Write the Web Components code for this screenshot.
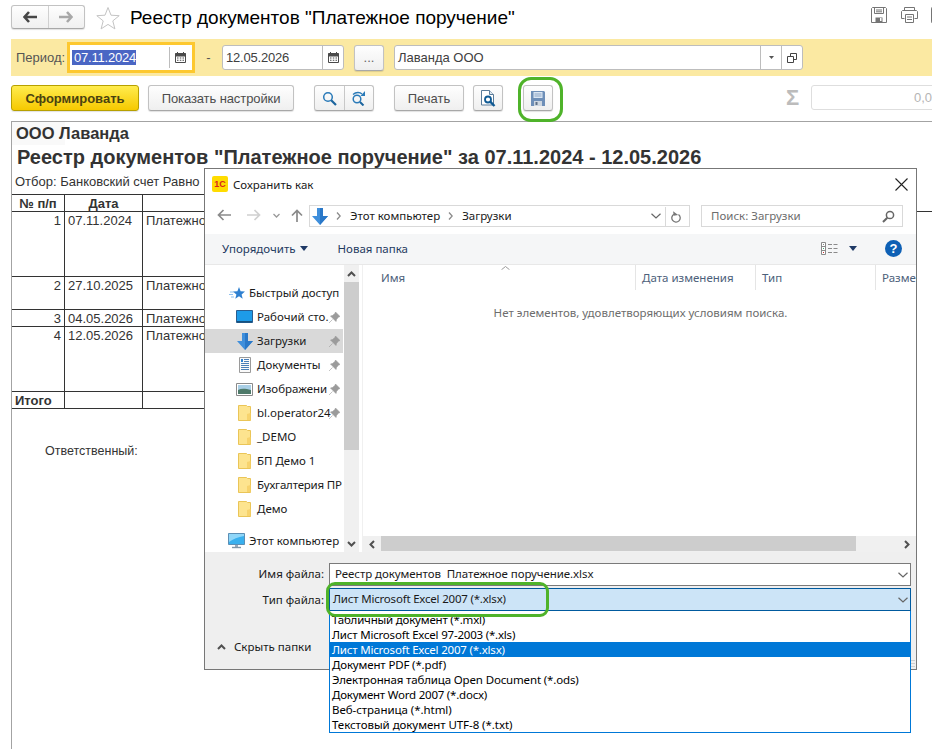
<!DOCTYPE html>
<html lang="ru">
<head>
<meta charset="utf-8">
<title>Реестр документов</title>
<style>
    html, body { margin: 0; padding: 0; background: #fff; }
</style>
</head>
<body>

<doc-form>
    <doc-header>Реестр документов "Платежное поручение"</doc-header>
    <period-bar></period-bar>
    <report-toolbar></report-toolbar>
    <report-sheet></report-sheet>
    <save-dialog></save-dialog>
    <green-mark style="left:518px;top:77px;width:45px;height:45px;border-radius:13px"></green-mark>
    <green-mark style="left:326px;top:582px;width:223px;height:35px;border-radius:9px"></green-mark>
</doc-form>

<script>
// < ======================================================
// < Icons
// < ======================================================

const FOLDER = `<svg width="13" height="16" viewBox="0 0 13 16"><path d="M.5.500h8l1 1h3v14H.5z" fill="#fde48f" stroke="#eac557"/><path d="M9 15V9l3.500-1v7z" fill="#f7d36d"/></svg>`;

const ICONS = {
    back: `<svg width="14" height="12" viewBox="0 0 14 12"><path d="M6 1 1.500 6 6 11M2 6h12" fill="none" stroke="#474747" stroke-width="2.600"/></svg>`,
    forward: `<svg width="14" height="12" viewBox="0 0 14 12"><path d="M8 1l4.500 5L8 11M12 6H0" fill="none" stroke="#a8a8a8" stroke-width="2.600"/></svg>`,
    star: `<svg width="24" height="24" viewBox="0 0 24 24"><path d="M12 1.500l3 7.700 8.200.5-6.400 5.200 2.100 8-6.900-4.500-6.900 4.500 2.100-8L.8 9.700 9 9.200z" fill="#fff" stroke="#c4c4c4"/></svg>`,
    saveOutline: `<svg width="16" height="16" viewBox="0 0 16 16"><path d="M1.500.5h13l1 1v14H.5v-14z" fill="none" stroke="#757575"/><path d="M3.500 1v5.500h9V1M5 3h6M5 4.800h6" fill="none" stroke="#757575"/><path d="M4.500 15v-4.500h7V15z" fill="#757575"/><path d="M9 11h1.500v3H9z" fill="#fff"/></svg>`,
    printOutline: `<svg width="17" height="16" viewBox="0 0 17 16"><path d="M3.500 4V.5h10V4M3.500 11.500h-3v-7l1-1h14l1 1v7h-3" fill="none" stroke="#757575"/><path d="M4.500 7.500h8v8h-8zM6 10h5M6 12.500h5" fill="#fff" stroke="#757575"/></svg>`,
    calendar: `<svg width="11" height="11" viewBox="0 0 11 11"><path d="M.5 2h10v8.500H.5z" fill="none" stroke="#4a4a4a"/><path d="M.5 1.500h10V4H.5zM2.500 0v2M8.500 0v2" fill="#4a4a4a" stroke="#4a4a4a"/><path d="M2 5.500h1.500v1H2zM4.800 5.500h1.500v1H4.800zM7.500 5.500H9v1H7.500zM2 7.800h1.500v1H2zM4.800 7.800h1.500v1H4.800zM7.500 7.800H9v1H7.500z" fill="#4a4a4a"/></svg>`,
    caret: `<svg width="5" height="3" viewBox="0 0 5 3"><path d="M0 0h5L2.500 3z" fill="#555"/></svg>`,
    openRef: `<svg width="10" height="10" viewBox="0 0 10 10"><path d="M3.500.5h6v6h-6z" fill="#fff" stroke="#444"/><path d="M.5 3.500h6v6h-6z" fill="#fff" stroke="#444"/></svg>`,
    search: `<svg width="15" height="15" viewBox="0 0 15 15"><circle cx="6" cy="6" r="4.300" fill="none" stroke="#2a7ab8" stroke-width="1.500"/><path d="M9.200 9.200 14 14" stroke="#1c659e" stroke-width="2.200"/></svg>`,
    searchNext: `<svg width="15" height="15" viewBox="0 0 15 15"><circle cx="6" cy="8" r="3.800" fill="none" stroke="#2a7ab8" stroke-width="1.500"/><path d="M9 11l3.500 3.500" stroke="#1c659e" stroke-width="2"/><path d="M2 3.500C5 .8 9 1 11 3" fill="none" stroke="#2a7ab8" stroke-width="1.300"/><path d="M14 0v5H9.500z" fill="#2a7ab8"/></svg>`,
    preview: `<svg width="15" height="17" viewBox="0 0 15 17"><path d="M.5.500h8l4 4V15H.5z" fill="#fff" stroke="#5a7b99"/><path d="M8.500.500v4h4" fill="#dfe8f0" stroke="#5a7b99"/><circle cx="7" cy="9.500" r="3" fill="#fff" stroke="#0f5a94" stroke-width="1.800"/><path d="M9.200 11.700 13.500 16" stroke="#0f5a94" stroke-width="2.400"/></svg>`,
    floppy: `<svg width="14" height="15" viewBox="0 0 14 15"><path d="M0 0h13l1 1v14H0z" fill="#6e8fb8"/><path d="M2.500 1h9v6h-9z" fill="#dbe6f2"/><path d="M3.500 3h7M3.500 5h7" stroke="#8ba5c6"/><path d="M3 10h8v5H3z" fill="#cdd6e0"/><path d="M4.500 11h2v3h-2z" fill="#5d6f86"/></svg>`,
    navBack: `<svg width="14" height="12" viewBox="0 0 14 12"><path d="M6.500 1 1.500 6l5 5M2 6h12" fill="none" stroke="#8a8a8a" stroke-width="1.700"/></svg>`,
    navForward: `<svg width="14" height="12" viewBox="0 0 14 12"><path d="M7.500 1l5 5-5 5M12 6H0" fill="none" stroke="#d0d0d0" stroke-width="1.700"/></svg>`,
    navUp: `<svg width="12" height="13" viewBox="0 0 12 13"><path d="M1 6.500l5-5 5 5M6 2v11" fill="none" stroke="#8a8a8a" stroke-width="1.700"/></svg>`,
    chevDownSmall: `<svg width="7" height="5" viewBox="0 0 7 5"><path d="M.5 1 3.500 4l3-3" fill="none" stroke="#9a9a9a" stroke-width="1.300"/></svg>`,
    chevRight: `<svg width="5" height="8" viewBox="0 0 5 8"><path d="M1 .5 4.200 4 1 7.500" fill="none" stroke="#8a8a8a" stroke-width="1.300"/></svg>`,
    chevDown: `<svg class="chev" width="10" height="6" viewBox="0 0 10 6"><path d="M.5.800 5 5 9.500.800" fill="none" stroke="#666" stroke-width="1.200"/></svg>`,
    downloads: `<svg width="16" height="17" viewBox="0 0 16 17"><path d="M5 0h6v8h5l-8 9-8-9h5z" fill="#3f8fdc"/><path d="M8 0h3v8h5l-8 9z" fill="#2a78c8"/></svg>`,
    refresh: `<svg width="10" height="12" viewBox="0 0 10 12"><path d="M3 3.200a4.200 4.200 0 1 0 4.500.3" fill="none" stroke="#777" stroke-width="1.300"/><path d="M2.500 0v4.500H7z" fill="#777" transform="rotate(-8 4 3)"/></svg>`,
    lens: `<svg width="13" height="13" viewBox="0 0 13 13"><circle cx="8" cy="5" r="3.600" fill="none" stroke="#666" stroke-width="1.500"/><path d="M5.300 7.700 1 12" stroke="#666" stroke-width="2"/></svg>`,
    close: `<svg width="13" height="13" viewBox="0 0 13 13"><path d="M.5.500l12 12M12.500.500l-12 12" stroke="#222" stroke-width="1.100"/></svg>`,
    views: `<svg width="17" height="13" viewBox="0 0 17 13"><path d="M.5.500h4v12h-4zM.5 4.500h4M.5 8.500h4" fill="#fff" stroke="#8a8a8a"/><path d="M2 2h1v1H2z" fill="#888"/><path d="M2 10h1v1H2z" fill="#c33"/><path d="M2 6h1v1H2z" fill="#4a7"/><path d="M7 2.500h4M12.500 2.500h4M7 6.500h4M12.500 6.500h4M7 10.500h4M12.500 10.500h4" stroke="#8a8a8a"/></svg>`,
    caretNavy: `<svg width="8" height="5" viewBox="0 0 8 5"><path d="M0 0h8L4 5z" fill="#1f3a66"/></svg>`,
    sortUp: `<svg width="9" height="4" viewBox="0 0 9 4"><path d="M.5 3.700 4.500.5l4 3.200" fill="none" stroke="#9a9a9a"/></svg>`,
    scrollUp: `<svg width="9" height="6" viewBox="0 0 9 6"><path d="M1 5l3.500-3.500L8 5" fill="none" stroke="#505050" stroke-width="2"/></svg>`,
    scrollDown: `<svg width="9" height="6" viewBox="0 0 9 6"><path d="M1 1l3.500 3.500L8 1" fill="none" stroke="#505050" stroke-width="2"/></svg>`,
    scrollLeft: `<svg width="6" height="9" viewBox="0 0 6 9"><path d="M5 1 1.500 4.500 5 8" fill="none" stroke="#505050" stroke-width="2"/></svg>`,
    scrollRight: `<svg width="6" height="9" viewBox="0 0 6 9"><path d="M1 1l3.500 3.500L1 8" fill="none" stroke="#505050" stroke-width="2"/></svg>`,
    quick: `<svg width="16" height="15" viewBox="0 0 16 15"><path d="M10 1l1.600 4.300 4.400.3-3.400 2.800 1.100 4.400L10 10.300l-3.700 2.500 1.100-4.400-3.400-2.800 4.400-.3z" fill="#2f80d0"/><path d="M1 6h4M0 8.500h4M2 11h3" stroke="#8fc0ee"/></svg>`,
    desktop: `<svg width="17" height="14" viewBox="0 0 17 14"><path d="M.5.500h16v12H.5z" fill="#1d9be8" stroke="#2a5d8f"/><path d="M1 11h15v1.500H1z" fill="#14517f"/></svg>`,
    arrow: `<svg width="16" height="17" viewBox="0 0 16 17"><path d="M5 0h6v8h5l-8 9-8-9h5z" fill="#3f8fdc"/><path d="M8 0h3v8h5l-8 9z" fill="#2a78c8"/></svg>`,
    docs: `<svg width="12" height="16" viewBox="0 0 12 16"><path d="M.5.500h11v15H.5z" fill="#fafafa" stroke="#9a9a9a"/><path d="M5 2.500h5M5 4.500h5M2 6.500h8M2 8.500h8M2 10.500h8M2 12.500h8" stroke="#4a7fb8"/><path d="M2 2h2v3H2z" fill="#2f80d0"/></svg>`,
    images: `<svg width="17" height="13" viewBox="0 0 17 13"><path d="M.5.500h16v12H.5z" fill="#fff" stroke="#8a8a8a"/><path d="M2 2h13v5H2z" fill="#a9cfe6"/><path d="M2 7c4-2 8-1 13 0v4H2z" fill="#4e7a6a"/></svg>`,
    folder: FOLDER,
    computer: `<svg width="17" height="16" viewBox="0 0 17 16"><path d="M.5.500h16v11H.5z" fill="#39b0ee" stroke="#5c8fb5"/><path d="M1 1h15v2C10 4 5 6 1 9z" fill="#8fd6f8"/><path d="M7 12h3v2H7z" fill="#9ab"/><path d="M4 14.500h9" stroke="#7f96a8" stroke-width="1.400"/></svg>`,
    pin: `<svg width="11" height="11" viewBox="0 0 11 11"><path d="M6.500 0 11 4.500 9.500 5 7.500 7.500 7 9.500 1.500 4 3.500 3.500 6 1.500zM3.500 7.500 0 11" fill="#9b9b9b" stroke="#9b9b9b" stroke-width=".6"/></svg>`
};

// < ======================================================
// < Base class
// < ======================================================

/**
 * Base for all page elements, fills an open shadow root on first connect
 *
 * @extends HTMLElement
 */
class ShadowElement extends HTMLElement {

    connectedCallback() {
        if (this.shadowRoot) return;
        this.attachShadow({ mode: 'open' });
        this.shadowRoot.innerHTML = `<style>${this.constructor.css}</style>${this.render()}`;
    }

    render() {
        return `<slot></slot>`;
    }

}

const ARIAL = `"Liberation Sans", Arial, sans-serif`;
const SEGOE = `"Noto Sans", "Open Sans", sans-serif`;

// < ======================================================
// < Form shell
// < ======================================================

class DocForm extends ShadowElement {
    static css = `
    :host {
        display: block;
        position: relative;
        width: 932px;
        height: 749px;
        overflow: hidden;
        background: #fff;
        font-family: ${ARIAL};
    }`;
}

class GreenMark extends ShadowElement {
    static css = `
    :host {
        display: block;
        position: absolute;
        box-sizing: border-box;
        border: 3px solid #4fb32a;
        pointer-events: none;
    }`;
    render() { return ``; }
}

class UiButton extends ShadowElement {
    static css = `
    :host {
        display: flex;
        flex: none;
        align-items: center;
        justify-content: center;
        box-sizing: border-box;
        height: 26px;
        border: 1px solid #c2c2c2;
        border-bottom-color: #a8a8a8;
        border-radius: 3px;
        background: linear-gradient(#fefefe, #efefef);
        box-shadow: 0 1px 1px rgba(0, 0, 0, 0.12);
        color: #4d4d4d;
        font-size: 13px;
    }
    :host([primary]) {
        border-color: #b7a000;
        background: linear-gradient(#ffec4e, #f6c900);
        color: #4a4210;
        font-weight: bold;
    }`;
}

// < ======================================================
// < Header
// < ======================================================

class DocHeader extends ShadowElement {
    static css = `
    :host {
        display: flex;
        align-items: center;
        height: 39px;
        padding-left: 11px;
        color: #000;
    }
    #nav {
        display: flex;
        flex: none;
        box-sizing: border-box;
        width: 74px;
        height: 24px;
        margin-top: -5px;
        border: 1px solid #c2c2c2;
        border-bottom-color: #a8a8a8;
        border-radius: 3px;
        background: linear-gradient(#fefefe, #f0f0f0);
        box-shadow: 0 1px 1px rgba(0, 0, 0, 0.12);
    }
    #nav span { display: flex; align-items: center; justify-content: center; flex: 1; }
    #nav span + span { border-left: 1px solid #d0d0d0; }
    #star { display: flex; flex: none; margin: -4px 0 0 11px; }
    #title { margin: -3px 0 0 10px; font-size: 19px; white-space: nowrap; flex: 1; }
    #tools { display: flex; flex: none; gap: 14px; margin: -9px -15px 0 0; }
    #tools svg { flex: none; }
    #tools i { display: block; flex: none; width: 16px; height: 16px; margin-left: -1px; box-sizing: border-box; border: 1px solid #757575; border-right: 0; border-radius: 2px 0 0 2px; }`;
    render() {
        return `
        <div id="nav"><span>${ICONS.back}</span><span>${ICONS.forward}</span></div>
        <div id="star">${ICONS.star}</div>
        <div id="title"><slot></slot></div>
        <div id="tools">${ICONS.saveOutline}${ICONS.printOutline}<i></i></div>`;
    }
}

// < ======================================================
// < Period filter
// < ======================================================

class UiField extends ShadowElement {
    static css = `
    :host {
        display: flex;
        flex: none;
        box-sizing: border-box;
        height: 25px;
        border: 1px solid #bdbdbd;
        border-radius: 3px;
        background: #fff;
        color: #404040;
        font-size: 13px;
    }
    #text { flex: 1; align-self: center; padding-left: 3px; white-space: nowrap; overflow: hidden; }
    :host([flush]) #text { padding-left: 0; }
    .btn { display: flex; align-items: center; justify-content: center; width: 20px; border-left: 1px solid #bdbdbd; }`;
    render() {
        const icons = (this.getAttribute('icons') || '').split(' ').filter(Boolean);
        return `<div id="text"><slot></slot></div>` + icons.map(name => `<div class="btn">${ICONS[name]}</div>`).join('');
    }
}

class PeriodBar extends ShadowElement {
    static css = `
    :host {
        display: flex;
        align-items: center;
        box-sizing: border-box;
        height: 37px;
        margin-left: 11px;
        padding-left: 5px;
        background: #fbe9a2;
        color: #555;
        font-size: 13px;
    }
    #label { flex: none; width: 51px; white-space: nowrap; }
    #focus {
        flex: none;
        box-sizing: border-box;
        width: 128px;
        height: 31px;
        padding: 2px;
        border: 3px solid #fdc82f;
        background: #fff;
    }
    #focus ui-field { height: 21px; border: 0; border-radius: 0; }
    #focus mark { padding-left: 2px; background: #4a66c4; color: #fff; letter-spacing: -.2px; }
    #dash { flex: none; width: 27px; text-align: center; }
    #to { width: 122px; letter-spacing: -.2px; }
    #dots { width: 30px; margin: 0 10px; color: #666; }
    #org { width: 409px; }`;
    render() {
        return `
        <div id="label">Период:</div>
        <div id="focus"><ui-field flush icons="calendar"><mark>07.11.2024</mark></ui-field></div>
        <div id="dash">-</div>
        <ui-field id="to" icons="calendar">12.05.2026</ui-field>
        <ui-button id="dots">...</ui-button>
        <ui-field id="org" icons="caret openRef">Лаванда ООО</ui-field>`;
    }
}

// < ======================================================
// < Command bar
// < ======================================================

class ReportToolbar extends ShadowElement {
    static css = `
    :host {
        display: flex;
        align-items: flex-start;
        box-sizing: border-box;
        height: 45px;
        padding: 9px 0 0 11px;
        overflow: hidden;
    }
    #make { width: 128px; margin-right: 9px; }
    #settings { width: 146px; margin-right: 20px; letter-spacing: -.1px; }
    #find { width: 60px; margin-right: 20px; padding: 0; align-items: stretch; }
    #find span { flex: 1; display: flex; align-items: center; justify-content: center; }
    #find span + span { border-left: 1px solid #c8c8c8; }
    #print { width: 70px; margin-right: 9px; }
    #preview { width: 30px; margin-right: 20px; }
    #save { width: 30px; margin-right: 233px; }
    #sigma { flex: none; width: 25px; color: #bcbcbc; font: bold 22px ${ARIAL}; line-height: 26px; }
    #sum {
        box-sizing: border-box;
        flex: none;
        width: 130px;
        height: 25px;
        padding: 0 8px 0 0;
        border: 1px solid #dedede;
        border-radius: 3px;
        color: #b5b5b5;
        font-size: 13px;
        line-height: 23px;
        text-align: right;
    }`;
    render() {
        return `
        <ui-button id="make" primary>Сформировать</ui-button>
        <ui-button id="settings">Показать настройки</ui-button>
        <ui-button id="find"><span>${ICONS.search}</span><span>${ICONS.searchNext}</span></ui-button>
        <ui-button id="print">Печать</ui-button>
        <ui-button id="preview">${ICONS.preview}</ui-button>
        <ui-button id="save">${ICONS.floppy}</ui-button>
        <div id="sigma">Σ</div>
        <div id="sum">0,0</div>`;
    }
}

// < ======================================================
// < Report sheet
// < ======================================================

class ReportSheet extends ShadowElement {
    static css = `
    :host {
        display: block;
        box-sizing: border-box;
        height: 628px;
        margin-left: 11px;
        border-top: 1px solid #a3a3a3;
        border-left: 1px solid #a3a3a3;
        color: #333;
        font-size: 13px;
    }
    #org { height: 23px; line-height: 23px; padding-left: 4px; font-size: 16.5px; font-weight: bold; background: linear-gradient(90deg, #f9f9f9 53px, transparent 53px); }
    #title { height: 24px; line-height: 24px; padding-left: 5px; font-size: 20px; font-weight: bold; white-space: nowrap; }
    #filter { height: 25px; line-height: 25px; padding-left: 3px; white-space: nowrap; }
    table { border-collapse: separate; border-spacing: 0; table-layout: fixed; width: 920px; border-top: 0; }
    td { box-sizing: border-box; padding: 1px 0 0 3px; vertical-align: top; line-height: 15px; border-right: 1px solid #333; border-bottom: 1px solid #333; white-space: nowrap; overflow: hidden; }
    tr:first-child td { border-top: 1px solid #333; height: 18px; font-weight: bold; text-align: center; padding: 1px 0 0; }
    td:nth-child(1) { width: 53px; }
    td:nth-child(2) { width: 78px; }
    td:nth-child(3) { width: 300px; }
    td.fill { border: 0; }
    tr:first-child td.fill { border-top: 0; border-bottom: 1px solid #333; }
    td.num { text-align: right; padding-right: 3px; }
    .tall td { height: 65px; }
    .mid td { height: 33px; }
    .low td { height: 17px; }
    #resp { margin: 34px 0 0 33px; font-size: 12.5px; line-height: 16px; }`;
    render() {
        const row = (cls, num, date) => `<tr class="${cls}"><td class="num">${num}</td><td>${date}</td><td>Платежное</td><td class="fill"></td></tr>`;
        return `
        <div id="org">ООО Лаванда</div>
        <div id="title">Реестр документов "Платежное поручение" за 07.11.2024 - 12.05.2026</div>
        <div id="filter">Отбор: Банковский счет Равно</div>
        <table>
            <tr><td>№ п/п</td><td>Дата</td><td></td><td class="fill"></td></tr>
            ${row('tall', 1, '07.11.2024')}
            ${row('mid', 2, '27.10.2025')}
            ${row('low', 3, '04.05.2026')}
            ${row('tall', 4, '12.05.2026')}
            <tr class="low"><td style="font-weight:bold">Итого</td><td></td><td></td><td class="fill"></td></tr>
        </table>
        <div id="resp">Ответственный:</div>`;
    }
}

// < ======================================================
// < Save dialog
// < ======================================================

class NavItem extends ShadowElement {
    static css = `
    :host {
        display: flex;
        align-items: center;
        box-sizing: border-box;
        height: 24px;
        color: #1a1a1a;
        white-space: nowrap;
    }
    :host([selected]) { background: #d9d9d9; }
    #icon { display: flex; justify-content: center; flex: none; width: 17px; margin-right: 4px; }
    #label { flex: none; padding-bottom: 2px; }
    #pin { position: absolute; left: 124px; display: flex; }`;
    render() {
        const pin = this.hasAttribute('pin') ? `<div id="pin">${ICONS.pin}</div>` : ``;
        return `<div id="icon">${ICONS[this.getAttribute('icon')]}</div><div id="label"><slot></slot></div>${pin}`;
    }
}

class TypeList extends ShadowElement {
    static css = `
    :host {
        display: block;
        position: absolute;
        left: 124px;
        top: 442px;
        width: 582px;
        box-sizing: border-box;
        border: 1px solid #0078d7;
        border-top: 0;
        padding-top: 1px;
        background: #fff;
        color: #000;
    }
    div { height: 15px; line-height: 15px; padding-left: 2px; white-space: nowrap; }
    .on { background: #0078d7; color: #fff; }`;
    render() {
        const items = [
            ['Табличный документ (*.mxl)', -.2],
            ['Лист Microsoft Excel 97-2003 (*.xls)', -.2],
            ['Лист Microsoft Excel 2007 (*.xlsx)', -.2],
            ['Документ PDF (*.pdf)', -.15],
            ['Электронная таблица Open Document (*.ods)', -.15],
            ['Документ Word 2007 (*.docx)', -.22],
            ['Веб-страница (*.html)', -.05],
            ['Текстовый документ UTF-8 (*.txt)', -.06]
        ];
        return items.map(([text, spacing], i) => `<div class="${i === 2 ? 'on' : ''}" style="letter-spacing:${spacing}px">${text}</div>`).join('');
    }
}

class SaveDialog extends ShadowElement {
    static css = `
    :host {
        display: block;
        position: absolute;
        left: 204px;
        top: 168px;
        width: 713px;
        height: 502px;
        box-sizing: border-box;
        border: 1px solid #777;
        background: #fff;
        color: #1a1a1a;
        font-family: ${SEGOE};
        font-size: 11.5px;
    }
    #frame { display: flex; flex-direction: column; height: 100%; }

    #head { display: flex; align-items: center; flex: none; box-sizing: border-box; height: 35px; padding: 0 8px 5px 7px; }
    #logo { width: 16px; height: 16px; margin-right: 5px; border-radius: 2px; background: #ffdc00; color: #d8261c; font: bold 9px/16px ${ARIAL}; text-align: center; overflow: hidden; }
    #caption { flex: 1; }

    #nav { display: flex; align-items: flex-start; flex: none; height: 30px; padding-left: 12px; }
    #nav > span { display: flex; height: 22px; align-items: center; flex: none; }
    #addr { display: flex; align-items: center; box-sizing: border-box; width: 381px; height: 22px; margin: 1px 0 0 6px; padding: 0 3px 2px 2px; border: 1px solid #d9d9d9; flex: none; }
    #addr svg { margin-top: 2px; }
    #addr .crumb { margin: 0 9px 0 8px; display: flex; }
    #addr .grow { flex: 1; }
    #addr .split { display: flex; align-items: center; justify-content: center; height: 20px; border-left: 1px solid #d9d9d9; width: 20px; margin: 2px 0 -2px 4px; }
    #addr .split svg { margin-top: 0; }
    #find { display: flex; align-items: center; justify-content: space-between; box-sizing: border-box; width: 202px; height: 22px; margin: 1px 0 0 11px; padding: 0 7px 2px 9px; border: 1px solid #d9d9d9; color: #6d6d6d; flex: none; }
    #find svg { margin-top: 2px; }

    #bar { display: flex; align-items: center; flex: none; box-sizing: border-box; height: 31px; padding: 0 0 2px 17px; background: #f5f6f7; border-bottom: 1px solid #e8e8e8; color: #1f3a5f; }
    #bar .gap { margin-left: 30px; }
    #bar #arrange { display: flex; align-items: center; gap: 4px; }
    #views { display: flex; align-items: center; gap: 11px; margin-left: auto; margin-right: 28px; }
    #help { width: 17px; height: 17px; margin-right: 14px; border-radius: 50%; background: #0e60b5; color: #fff; font: bold 13px/17px ${ARIAL}; text-align: center; }

    #main { display: flex; flex: none; height: 287px; }
    #tree { position: relative; box-sizing: border-box; width: 138px; margin-right: 1px; padding-top: 16px; overflow: hidden; flex: none; }
    #tree nav-item { position: relative; padding-left: 31px; }
    #tree nav-item.top { padding-left: 23px; }
    #tree nav-item.sep { margin-top: 8px; }
    #vscroll { display: flex; flex-direction: column; flex: none; width: 15px; background: #f0f0f0; }
    #vscroll .arrow { display: flex; align-items: center; justify-content: center; height: 17px; flex: none; }
    #vscroll .thumb { height: 168px; background: #cdcdcd; flex: none; }
    #vscroll .space { flex: 1; }
    #pane { position: relative; display: flex; flex-direction: column; flex: 1; min-width: 0; margin-left: 3px; border-left: 1px solid #f0f0f0; overflow: hidden; }
    #cols { position: relative; display: flex; flex: none; height: 25px; color: #4c607a; }
    #cols > div { box-sizing: border-box; flex: none; padding: 5px 0 0 6px; border-right: 1px solid #e5e5e5; white-space: nowrap; }
    #cols .name { width: 273px; padding-left: 18px; }
    #cols .w { width: 120px; }
    #sort { position: absolute; left: 138px; top: 1px; display: flex; }
    #empty { flex: 1; padding-top: 15px; text-align: center; color: #6d6d6d; transform: translateX(1px); }
    #hscroll { display: flex; align-items: stretch; flex: none; height: 16px; background: #f0f0f0; }
    #hscroll .arrow { display: flex; align-items: center; justify-content: center; flex: none; width: 18px; }
    #hscroll .thumb { width: 475px; height: 15px; background: #cdcdcd; flex: none; }
    #hscroll .space { flex: 1; }

    #foot { position: relative; flex: 1; box-sizing: border-box; padding-top: 11px; background: #efefef; }
    .line { display: grid; grid-template-columns: 119px 582px; column-gap: 5px; align-items: center; }
    .line + .line { margin-top: 2px; }
    .line label { text-align: right; padding-bottom: 2px; }
    .box { display: flex; align-items: center; justify-content: space-between; box-sizing: border-box; height: 23px; padding: 0 2px 2px 5px; border: 1px solid #7a7a7a; background: #fff; white-space: pre; letter-spacing: -.07px; }
    .box .chev { margin-top: 2px; }
    .box.open { height: 24px; padding-left: 3px; border-color: #005a9e; border-bottom-width: 2px; background: #cce4f7; letter-spacing: -.2px; }
    #hide { position: absolute; left: 12px; top: 87px; display: flex; align-items: center; gap: 8px; }
    #grip { position: absolute; right: 1px; bottom: 1px; width: 4px; height: 8px; background: repeating-linear-gradient(#cfcfcf 0 1px, transparent 1px 3px); }`;
    render() {
        return `
        <div id="frame">
            <div id="head">
                <div id="logo">1С</div>
                <div id="caption">Сохранить как</div>
                ${ICONS.close}
            </div>
            <div id="nav">
                <span>${ICONS.navBack}</span>
                <span style="margin-left:16px">${ICONS.navForward}</span>
                <span style="margin-left:12px">${ICONS.chevDownSmall}</span>
                <span style="margin-left:11px">${ICONS.navUp}</span>
                <div id="addr">
                    ${ICONS.downloads}
                    <span class="crumb">${ICONS.chevRight}</span>Этот компьютер
                    <span class="crumb">${ICONS.chevRight}</span>Загрузки
                    <span class="grow"></span>
                    ${ICONS.chevDown}
                    <span class="split">${ICONS.refresh}</span>
                </div>
                <div id="find">Поиск: Загрузки ${ICONS.lens}</div>
            </div>
            <div id="bar">
                <div id="arrange">Упорядочить ${ICONS.caretNavy}</div>
                <div class="gap">Новая папка</div>
                <div id="views">${ICONS.views}${ICONS.caretNavy}</div>
                <div id="help">?</div>
            </div>
            <div id="main">
                <div id="tree">
                    <nav-item class="top" icon="quick">Быстрый доступ</nav-item>
                    <nav-item icon="desktop" pin>Рабочий сто.</nav-item>
                    <nav-item icon="arrow" pin selected>Загрузки</nav-item>
                    <nav-item icon="docs" pin>Документы</nav-item>
                    <nav-item icon="images" pin>Изображени</nav-item>
                    <nav-item icon="folder" pin>bl.operator24</nav-item>
                    <nav-item icon="folder">_DEMO</nav-item>
                    <nav-item icon="folder">БП Демо 1</nav-item>
                    <nav-item icon="folder" style="letter-spacing:-.2px">Бухгалтерия ПР</nav-item>
                    <nav-item icon="folder">Демо</nav-item>
                    <nav-item class="top sep" icon="computer">Этот компьютер</nav-item>
                </div>
                <div id="vscroll">
                    <div class="arrow">${ICONS.scrollUp}</div>
                    <div class="thumb"></div>
                    <div class="space"></div>
                    <div class="arrow">${ICONS.scrollDown}</div>
                </div>
                <div id="pane">
                    <div id="cols">
                        <div class="name">Имя</div>
                        <div class="w">Дата изменения</div>
                        <div class="w">Тип</div>
                        <div class="w" style="border:0">Разме</div>
                        <span id="sort">${ICONS.sortUp}</span>
                    </div>
                    <div id="empty">Нет элементов, удовлетворяющих условиям поиска.</div>
                    <div id="hscroll">
                        <div class="arrow">${ICONS.scrollLeft}</div>
                        <div class="thumb"></div>
                        <div class="space"></div>
                        <div class="arrow">${ICONS.scrollRight}</div>
                    </div>
                </div>
            </div>
            <div id="foot">
                <div class="line">
                    <label>Имя файла:</label>
                    <div class="box">Реестр документов  Платежное поручение.xlsx${ICONS.chevDown}</div>
                </div>
                <div class="line">
                    <label>Тип файла:</label>
                    <div class="box open">Лист Microsoft Excel 2007 (*.xlsx)${ICONS.chevDown}</div>
                </div>
                <div id="hide">${ICONS.scrollUp} Скрыть папки</div>
                <div id="grip"></div>
            </div>
        </div>
        <type-list></type-list>`;
    }
}

// < ======================================================
// < Custom Element Registration
// < ======================================================

customElements.define('doc-form', DocForm);
customElements.define('green-mark', GreenMark);
customElements.define('ui-button', UiButton);
customElements.define('ui-field', UiField);
customElements.define('doc-header', DocHeader);
customElements.define('period-bar', PeriodBar);
customElements.define('report-toolbar', ReportToolbar);
customElements.define('report-sheet', ReportSheet);
customElements.define('nav-item', NavItem);
customElements.define('type-list', TypeList);
customElements.define('save-dialog', SaveDialog);
</script>
</body>
</html>
